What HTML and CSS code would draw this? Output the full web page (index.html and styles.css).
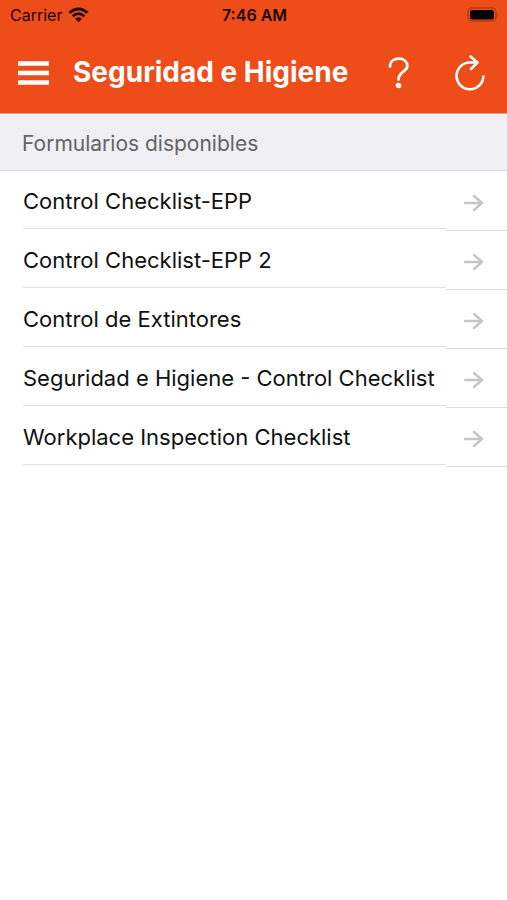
FILE: index.html
```html
<!DOCTYPE html>
<html lang="es">
<head>
<meta charset="utf-8">
<meta name="viewport" content="width=device-width, initial-scale=1">
<title>Seguridad e Higiene</title>
<link rel="stylesheet" href="styles.css">
</head>
<body>
<header class="top">
  <div class="status">
    <span class="carrier">Carrier
      <svg width="21" height="16" viewBox="0 0 21 16" aria-hidden="true"><g fill="none" stroke="currentColor" stroke-width="2.8"><path d="M1.4 5.8Q10.500-2 19.600 5.800"/><path d="M4.700 9.300Q10.500 4 16.300 9.300"/></g><path d="M7.100 11.700Q10.500 8.700 13.900 11.700L10.500 15.200Z" fill="currentColor"/></svg>
    </span>
    <time class="clock">7:46 AM</time>
    <svg class="battery" width="33" height="17" viewBox="0 0 33 17" aria-hidden="true"><rect x="2" y="1" width="28" height="13" rx="4" fill="none" stroke="#b83a12" stroke-width="1.500"/><rect x="4" y="3" width="24" height="9.500" rx="2.500"/><path d="M31.500 6Q33 7.500 31.500 9.500Z" fill="#a43310"/></svg>
  </div>
  <nav class="bar">
    <button class="icon" aria-label="Menú"><svg width="31" height="25" viewBox="0 0 31 25"><path d="M0 2.500H31M0 12H31M0 21.500H31" stroke="currentColor" stroke-width="4.600"/></svg></button>
    <h1>Seguridad e Higiene</h1>
    <button class="icon help" aria-label="Ayuda"><svg width="22" height="32" viewBox="0 0 22 32"><path d="M2 9.500C2 4.500 6 1.700 10.800 1.700C15.800 1.700 19.300 4.700 19.300 9C19.300 15 10.500 14.500 10.500 22.500" fill="none" stroke="currentColor" stroke-width="2.800" stroke-linecap="round"/><circle cx="10.500" cy="28.500" r="2.800" fill="currentColor"/></svg></button>
    <button class="icon" aria-label="Actualizar"><svg width="30" height="36" viewBox="0 0 30 36"><g fill="none" stroke="currentColor" stroke-width="2.600" stroke-linejoin="round"><path d="M22 7.500H15.500A13.400 13.400 0 1 0 28.400 20.500"/><path d="M15.500 1.500L22.500 7.500L16 14" stroke-linecap="round"/></g></svg></button>
  </nav>
</header>
<main>
  <h2>Formularios disponibles</h2>
  <ul class="forms">
    <li><a href="#"><span class="name">Control Checklist-EPP</span><span class="go"><svg width="20" height="18" viewBox="0 0 20 18" aria-hidden="true"><path d="M1 9H18M10 2L18 9L10 16"/></svg></span></a></li>
    <li><a href="#"><span class="name">Control Checklist-EPP 2</span><span class="go"><svg width="20" height="18" viewBox="0 0 20 18" aria-hidden="true"><path d="M1 9H18M10 2L18 9L10 16"/></svg></span></a></li>
    <li><a href="#"><span class="name">Control de Extintores</span><span class="go"><svg width="20" height="18" viewBox="0 0 20 18" aria-hidden="true"><path d="M1 9H18M10 2L18 9L10 16"/></svg></span></a></li>
    <li><a href="#"><span class="name">Seguridad e Higiene - Control Checklist</span><span class="go"><svg width="20" height="18" viewBox="0 0 20 18" aria-hidden="true"><path d="M1 9H18M10 2L18 9L10 16"/></svg></span></a></li>
    <li><a href="#"><span class="name">Workplace Inspection Checklist</span><span class="go"><svg width="20" height="18" viewBox="0 0 20 18" aria-hidden="true"><path d="M1 9H18M10 2L18 9L10 16"/></svg></span></a></li>
  </ul>
</main>
</body>
</html>
```
FILE: styles.css
```css
* { box-sizing: border-box; }
body {
  margin: 0;
  background: #fff;
  color: #111;
  font-family: Inter, "Liberation Sans", sans-serif;
}
svg { display: block; }
.top {
  background: #ee4c19;
  border-bottom: 1px solid #d3a59a;
}
.status {
  display: grid;
  grid-template-columns: 1fr auto 1fr;
  align-items: center;
  height: 30px;
  padding: 0 8px 0 10px;
  color: #1c0803;
  font-size: 16px;
}
.carrier { display: flex; align-items: center; gap: 6px; }
.clock { font-weight: 600; }
.battery { justify-self: end; }
.bar {
  display: flex;
  align-items: center;
  height: 83px;
  padding: 3px 22px 0 18px;
  color: #fff;
}
h1 {
  flex: 1;
  margin: 0 0 2px 24px;
  font-size: 28px;
  line-height: 36px;
  font-weight: 700;
  white-space: nowrap;
}
.icon {
  padding: 0;
  border: 0;
  background: none;
  color: inherit;
}
.help { margin-right: 45px; }
h2 {
  margin: 0;
  padding: 16px 22px 12px;
  background: #efeff4;
  border-bottom: 1px solid #dcdce0;
  color: #636367;
  font-size: 21px;
  line-height: 28px;
  font-weight: 400;
}
.forms {
  margin: 0;
  padding: 1px 0 0;
  list-style: none;
}
.forms a {
  display: flex;
  align-items: flex-start;
  color: inherit;
  text-decoration: none;
}
.name {
  flex: 1;
  margin-left: 23px;
  padding: 15px 0 13px;
  border-bottom: 1px solid #e2e2e3;
  font-size: 22px;
  line-height: 28px;
  white-space: nowrap;
}
.go {
  display: flex;
  align-items: center;
  width: 61px;
  height: 59px;
  padding: 4px 0 0 18px;
  border-bottom: 1px solid #dcdcdd;
}
.go path {
  fill: none;
  stroke: #c6c6c8;
  stroke-width: 2.4;
  stroke-linecap: round;
  stroke-linejoin: round;
}
```
